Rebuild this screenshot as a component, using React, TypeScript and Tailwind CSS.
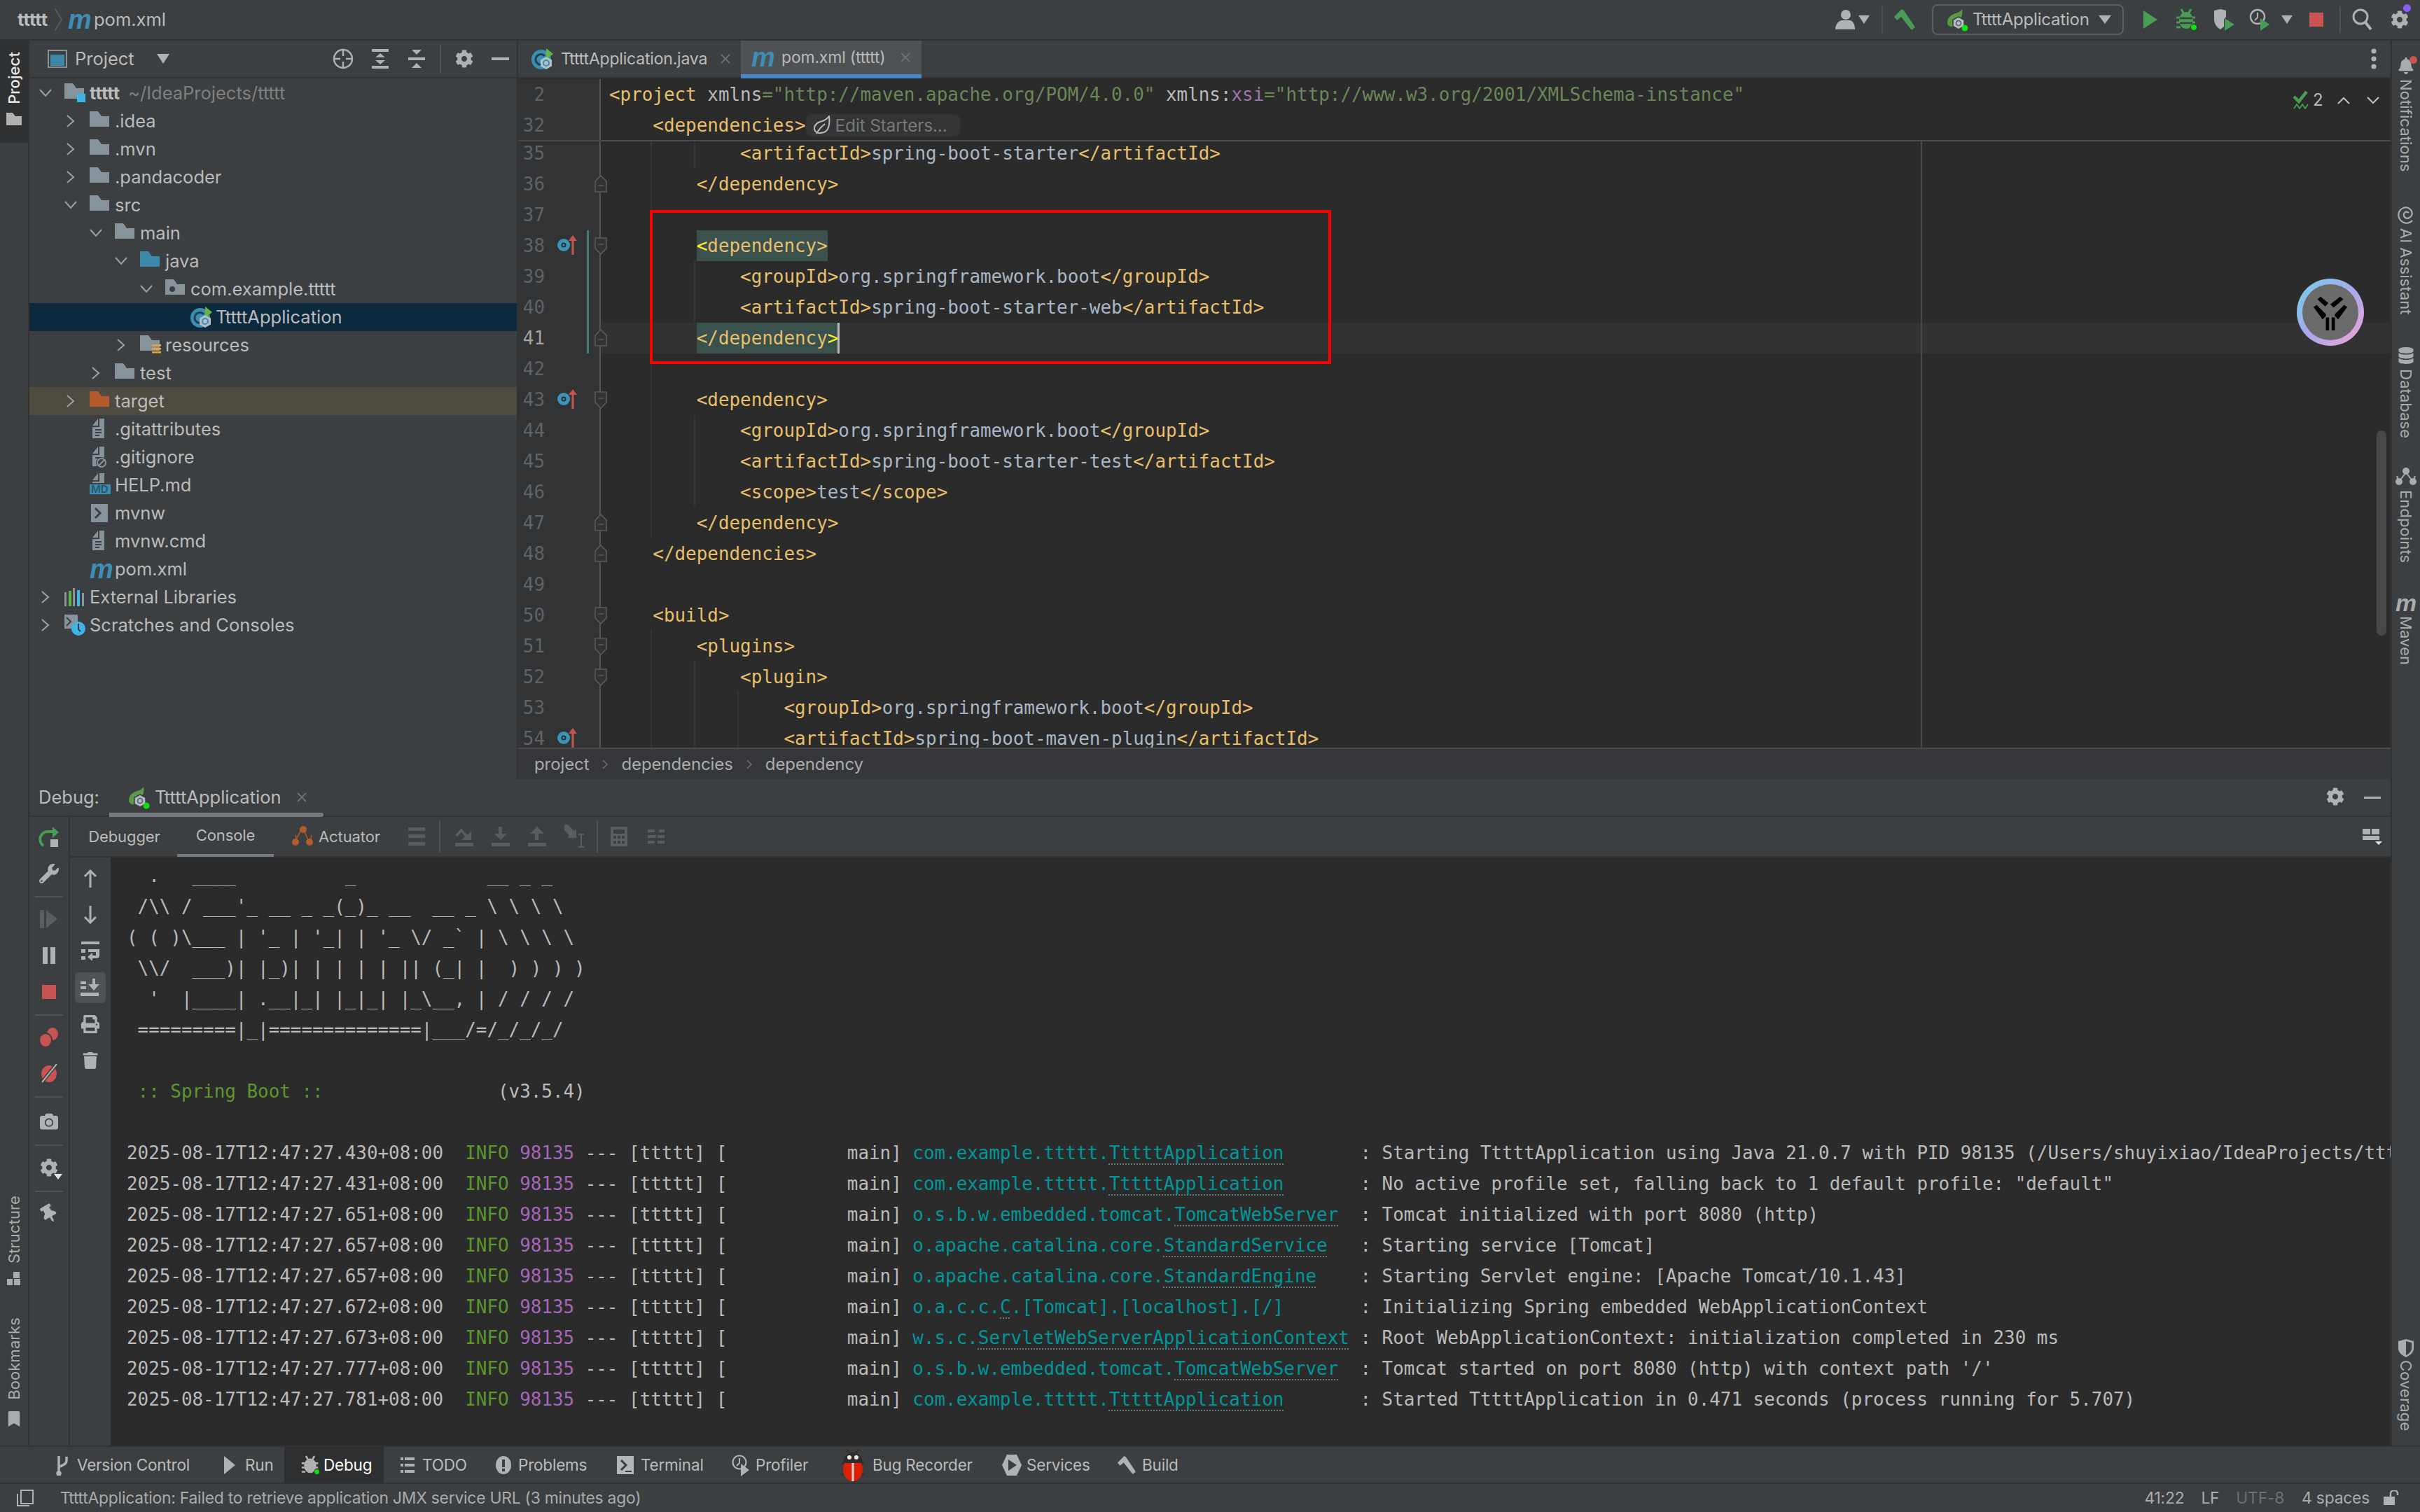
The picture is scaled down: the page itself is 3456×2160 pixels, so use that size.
import React from "react";
import { FaCog, FaCamera, FaPrint, FaTrash, FaWrench, FaThumbtack, FaBell, FaDatabase, FaBookmark } from "react-icons/fa";

const GREY = "#afb1b3";
const FOLDER = "#87939a";

function Chevron({ down }: { down?: boolean }) {
  return down ? (
    <svg width="18" height="12" viewBox="0 0 18 12"><path d="M1 1l8 9 8-9" fill="none" stroke="#9da0a2" strokeWidth="2" /></svg>
  ) : (
    <svg width="12" height="18" viewBox="0 0 12 18"><path d="M1 1l9 8-9 8" fill="none" stroke="#9da0a2" strokeWidth="2" /></svg>
  );
}

function Folder({ color = FOLDER, kind }: { color?: string; kind?: string }) {
  return (
    <svg width="32" height="30" viewBox="0 0 32 30" className="overflow-visible">
      <path d="M0 1h12l5 7h11v15H0z" fill={color} />
      {kind === "root" && <rect x="18" y="16" width="12" height="12" fill="#3fb3e5" />}
      {kind === "pkg" && <circle cx="10" cy="15" r="4" fill="#3c3f41" />}
      {kind === "res" && (
        <g fill="#e5a33a">
          <rect x="17" y="14" width="13" height="2.6" />
          <rect x="17" y="19" width="13" height="2.6" />
          <rect x="17" y="24" width="13" height="2.6" />
        </g>
      )}
    </svg>
  );
}

function FileIcon({ kind }: { kind?: string }) {
  return (
    <svg width="32" height="30" viewBox="0 0 32 30" className="overflow-visible">
      <g>
        <path d="M12 0v10H4z" fill={FOLDER} />
        <path d="M14 0h7v28H4V12h10z" fill={FOLDER} />
      </g>
      {kind === "text" && (
        <g fill="#3c3f41">
          <rect x="8" y="15" width="9" height="2" />
          <rect x="8" y="19" width="9" height="2" />
          <rect x="8" y="23" width="6" height="2" />
        </g>
      )}
      {kind === "ignore" && (
        <g>
          <rect x="8" y="15" width="9" height="2" fill="#3c3f41" />
          <circle cx="17" cy="23" r="8" fill="#3c3f41" />
          <circle cx="17" cy="23" r="6" fill="none" stroke={FOLDER} strokeWidth="2" />
          <path d="M13 27l8-8" stroke={FOLDER} strokeWidth="2" />
        </g>
      )}
    </svg>
  );
}

function MdIcon() {
  return (
    <div className="relative w-[32px] h-[30px]">
      <svg width="32" height="30" viewBox="0 0 32 30" className="overflow-visible">
        <path d="M12 -2v10H4z" fill={FOLDER} />
        <path d="M14 -2h7v14H4V10h10z" fill={FOLDER} />
        <rect x="0" y="14" width="30" height="14" fill="#3a8eb0" />
      </svg>
      <span className="absolute left-[2px] top-[12px] text-[15px] leading-[18px] font-['Inter'] text-[#2f5466] font-semibold tracking-normal">MD</span>
    </div>
  );
}

function ShellIcon({ color = FOLDER, dark = "#3c3f41", under }: { color?: string; dark?: string; under?: boolean }) {
  return (
    <svg width="24" height="28" viewBox="0 0 24 28">
      <rect x="0" y="1" width="24" height="26" fill={color} />
      <path d="M6 7l7 7-7 7" fill="none" stroke={dark} strokeWidth="3" />
      {under && <rect x="12" y="22" width="9" height="2" fill={dark} />}
    </svg>
  );
}

function SpringApp({ className = "" }: { className?: string }) {
  return (
    <svg width="32" height="34" viewBox="0 0 32 34" className={className}>
      <circle cx="14" cy="18" r="14" fill="#3a8fb7" />
      <path d="M19 13a7.5 7.5 0 1 0 0 10" fill="none" stroke="#24404f" strokeWidth="3" />
      <path d="M21 2l10 8-10 8z" fill="#62b543" />
      <path d="M21 14l8 4.5v9L21 32l-8-4.5v-9z" fill="#b4bec4" />
      <circle cx="21" cy="23" r="4" fill="none" stroke="#3a8fb7" strokeWidth="2" />
    </svg>
  );
}

function RunConfigIcon() {
  return (
    <svg width="32" height="34" viewBox="0 0 32 34">
      <path d="M2 22c0-9 6-12 12-14 4-1 7-3 9-6 1 6 0 10-2 13l-8 12c-6 1-11-1-11-5z" fill="#5b9a45" />
      <path d="M18 13l8 4.5v9L18 31l-8-4.5v-9z" fill="#b4bec4" stroke="#3c3f41" strokeWidth="1.5" />
      <circle cx="18" cy="22" r="3.5" fill="none" stroke="#4d5a62" strokeWidth="1.6" />
      <circle cx="27" cy="29" r="4.5" fill="#0fe00f" />
    </svg>
  );
}

function Maven({ size = "md", color = "text-[#3d8db5]" }: { size?: string; color?: string }) {
  return (
    <span
      className={
        "font-['Liberation_Sans'] italic font-bold block leading-none tracking-normal " +
        color +
        (size === "md" ? " text-[38px]" : " text-[34px]")
      }
    >
      m
    </span>
  );
}

function Hammer({ color = "#499c54", size = 30 }: { color?: string; size?: number }) {
  return (
    <svg width={size} height={size} viewBox="0 0 30 30">
      <path d="M11 0L0 11l4 5 6-5 15 19 5-4L14 2z" fill={color} />
    </svg>
  );
}

function BugIcon({ color = "#499c54", dot = true, size = 30 }: { color?: string; dot?: boolean; size?: number }) {
  return (
    <svg width={size} height={size + 2} viewBox="0 0 30 32">
      <g stroke={color} strokeWidth="3">
        <path d="M8 1l4 7M22 1l-4 7M1 13h6M1 20h6M1 27h6M23 13h5M23 20h5M23 27h3" />
      </g>
      <ellipse cx="15" cy="17" rx="10" ry="12" fill={color} />
      {color !== GREY && <path d="M6 14h18M6 21h18" stroke="#3c3f41" strokeWidth="2.5" />}
      {dot && <circle cx="26" cy="27" r="4.5" fill="#0fe00f" stroke="#3c3f41" strokeWidth="1" />}
    </svg>
  );
}

function Divider() {
  return <div className="w-[2px] h-[38px] bg-[#4f5254]" />;
}

function TopBar() {
  return (
    <div className="h-[58px] shrink-0 flex items-center bg-[#3c3f41] border-b-2 border-[#323232] text-[#bbbbbb] font-['Inter'] text-[24px]">
      <span className="ml-[25px] w-[48px] font-bold text-[#bbbbbb] text-[25.5px]">ttttt</span>
      <svg width="12" height="32" viewBox="0 0 12 32" className="ml-[5px]"><path d="M1 1l9 15-9 15" fill="none" stroke="#5e6060" strokeWidth="1.6" /></svg>
      <div className="ml-[7px] w-[37px]"><Maven /></div>
      <span className="text-[25.5px]">pom.xml</span>
      <div className="ml-auto flex items-center">
        <svg width="30" height="32" viewBox="0 0 30 32" className="mr-[4px]">
          <circle cx="16" cy="9" r="7" fill={GREY} />
          <path d="M1 30c0-8 5-12 9-13h12c4 1 7 5 7 13z" fill={GREY} />
          <path d="M22 5a6 6 0 0 1 2 10" stroke="#3c3f41" strokeWidth="2" fill="none" />
        </svg>
        <svg width="16" height="12" viewBox="0 0 16 12"><path d="M0 0h16l-8 12z" fill={GREY} /></svg>
        <div className="ml-[17px]"><Divider /></div>
        <div className="ml-[16px]"><Hammer /></div>
        <div className="ml-[24px] w-[274px] h-[44px] rounded-[8px] border-2 border-[#5e6060] flex items-center pl-[18px] pr-[16px]">
          <RunConfigIcon />
          <span className="ml-[6px] tracking-[-0.2px]">TttttApplication</span>
          <svg className="ml-auto" width="18" height="12" viewBox="0 0 18 12"><path d="M0 0h18l-9 12z" fill={GREY} /></svg>
        </div>
        <svg className="ml-[28px]" width="20" height="26" viewBox="0 0 20 26"><path d="M0 0l20 13L0 26z" fill="#499c54" /></svg>
        <div className="ml-[26px]"><BugIcon /></div>
        <svg className="ml-[23px]" width="32" height="32" viewBox="0 0 32 32">
          <path d="M2 3l9-2 8 2v8l-1 3-2 1v11l-5 4c-6-3-9-9-9-15z" fill={GREY} />
          <path d="M17 14l14 9-14 9z" fill="#499c54" />
        </svg>
        <svg className="ml-[20px]" width="32" height="34" viewBox="0 0 32 34">
          <circle cx="12" cy="13" r="10" fill="none" stroke={GREY} strokeWidth="2.4" />
          <path d="M12 7v7l-4 4" stroke={GREY} strokeWidth="2" fill="none" />
          <path d="M16 15l13 9-13 9z" fill="#499c54" />
        </svg>
        <svg className="ml-[14px]" width="16" height="12" viewBox="0 0 16 12"><path d="M0 0h16l-8 12z" fill={GREY} /></svg>
        <div className="ml-[24px] w-[20px] h-[20px] bg-[#c75450]" />
        <div className="ml-[23px]"><Divider /></div>
        <svg className="ml-[16px]" width="30" height="32" viewBox="0 0 30 32">
          <circle cx="12" cy="12" r="10" fill="none" stroke={GREY} strokeWidth="3" />
          <path d="M19 20l8 10" stroke={GREY} strokeWidth="4" />
        </svg>
        <div className="relative ml-[25px] mr-[16px] w-[26px] h-[26px] text-[#afb1b3]">
          <FaCog size={26} />
          <div className="absolute right-[-3px] top-[-9px] w-[11px] h-[11px] rounded-full bg-[#8b5cf6]" />
        </div>
      </div>
    </div>
  );
}

function VText({ children, flip, cls = "" }: { children: React.ReactNode; flip?: boolean; cls?: string }) {
  return (
    <span className={"[writing-mode:vertical-rl] whitespace-nowrap text-[22px] leading-[40px] tracking-[0.1px] " + (flip ? "rotate-180 " : "") + cls}>
      {children}
    </span>
  );
}

function LeftStripe() {
  return (
    <div className="w-[42px] shrink-0 flex flex-col border-r-2 border-[#323232] text-[#a9abad]">
      <div className="h-[146px] w-[40px] bg-[#2e3032] flex flex-col items-center pt-[16px]">
        <VText flip cls="text-[#e6e6e6] font-medium">Project</VText>
        <svg className="mt-[12px]" width="22" height="18" viewBox="0 0 22 18"><path d="M0 0h9l4 5h9v13H0z" fill="#afb1b3" /></svg>
      </div>
      <div className="mt-auto flex flex-col items-center pb-[27px]">
        <VText flip>Structure</VText>
        <svg className="mt-[12px]" width="20" height="20" viewBox="0 0 20 20" fill="#a9abad">
          <rect x="9" y="0" width="9" height="9" /><rect x="0" y="10" width="8" height="9" /><rect x="10" y="10" width="9" height="9" />
        </svg>
        <div className="mt-[45px]"><VText flip>Bookmarks</VText></div>
        <div className="mt-[10px]"><FaBookmark size={22} /></div>
      </div>
    </div>
  );
}

function StripeItem({ icon, label, cls }: { icon: React.ReactNode; label: string; cls: string }) {
  return (
    <div className={"flex flex-col items-center " + cls}>
      <div className="h-[30px] flex items-center justify-center">{icon}</div>
      <VText cls="mt-[4px]">{label}</VText>
    </div>
  );
}

function RightStripe() {
  return (
    <div className="w-[42px] shrink-0 flex flex-col items-center border-l-2 border-[#323232] text-[#a9abad] pt-[21px] pb-[21px]">
      <StripeItem
        cls="h-[213px]"
        label="Notifications"
        icon={
          <div className="relative">
            <FaBell size={24} />
            <div className="absolute right-[-4px] top-[-2px] w-[11px] h-[11px] rounded-full bg-[#c75450]" />
          </div>
        }
      />
      <StripeItem
        cls="h-[201px]"
        label="AI Assistant"
        icon={
          <svg width="26" height="28" viewBox="0 0 26 28" fill="none" stroke="#a9abad" strokeWidth="2.2">
            <path d="M22 22c-3 4-9 5-14 2C3 21 1 15 3 10c2-5 8-8 13-6 5 2 7 7 5 11-2 3-6 5-9 3-3-2-3-6 0-8 2-1 4 0 5 1" />
          </svg>
        }
      />
      <StripeItem cls="h-[173px]" label="Database" icon={<FaDatabase size={24} />} />
      <StripeItem
        cls="h-[180px]"
        label="Endpoints"
        icon={
          <svg width="30" height="26" viewBox="0 0 30 26" fill="#a9abad">
            <circle cx="15" cy="5" r="5" /><circle cx="5" cy="20" r="5" /><circle cx="25" cy="20" r="5" />
            <path d="M14 8L6 19M16 8l8 11M2 12l2 6M28 12l-2 6" stroke="#a9abad" strokeWidth="2" />
          </svg>
        }
      />
      <StripeItem cls="h-[120px]" label="Maven" icon={<Maven size="sm" color="text-[#a9abad]" />} />
      <div className="mt-auto flex flex-col items-center">
        <svg width="22" height="26" viewBox="0 0 22 26"><path d="M0 3l11-3 11 3v10c0 6-5 10-11 13C5 23 0 19 0 13z" fill="#a9abad" /><path d="M11 3v20c4-2 8-5 8-10V5z" fill="#3c3f41" /></svg>
        <VText cls="mt-[4px]">Coverage</VText>
      </div>
    </div>
  );
}

type Row = { d: number; name: string; chev?: "r" | "d"; icon: React.ReactNode; cls?: string; extra?: string; bold?: boolean };

const PL = ["pl-[10px]", "pl-[46px]", "pl-[82px]", "pl-[118px]", "pl-[154px]", "pl-[190px]"];

const rows: Row[] = [
  { d: 0, name: "ttttt", chev: "d", icon: <Folder kind="root" />, extra: "~/IdeaProjects/ttttt", bold: true },
  { d: 1, name: ".idea", chev: "r", icon: <Folder /> },
  { d: 1, name: ".mvn", chev: "r", icon: <Folder /> },
  { d: 1, name: ".pandacoder", chev: "r", icon: <Folder /> },
  { d: 1, name: "src", chev: "d", icon: <Folder /> },
  { d: 2, name: "main", chev: "d", icon: <Folder /> },
  { d: 3, name: "java", chev: "d", icon: <Folder color="#3d87a8" /> },
  { d: 4, name: "com.example.ttttt", chev: "d", icon: <Folder kind="pkg" /> },
  { d: 5, name: "TttttApplication", icon: <SpringApp />, cls: "bg-[#0d293e]" },
  { d: 3, name: "resources", chev: "r", icon: <Folder kind="res" /> },
  { d: 2, name: "test", chev: "r", icon: <Folder /> },
  { d: 1, name: "target", chev: "r", icon: <Folder color="#b45a2c" />, cls: "bg-[#4f4b41]" },
  { d: 1, name: ".gitattributes", icon: <FileIcon kind="text" /> },
  { d: 1, name: ".gitignore", icon: <FileIcon kind="ignore" /> },
  { d: 1, name: "HELP.md", icon: <MdIcon /> },
  { d: 1, name: "mvnw", icon: <div className="pl-[2px]"><ShellIcon /></div> },
  { d: 1, name: "mvnw.cmd", icon: <FileIcon kind="text" /> },
  { d: 1, name: "pom.xml", icon: <Maven /> },
  {
    d: 0,
    name: "External Libraries",
    chev: "r",
    icon: (
      <svg width="30" height="26" viewBox="0 0 30 26">
        <rect x="0" y="6" width="3" height="20" fill={FOLDER} /><rect x="6" y="4" width="4" height="22" fill="#62b543" />
        <rect x="12" y="0" width="3" height="26" fill={FOLDER} /><rect x="18" y="3" width="4" height="23" fill="#3fb3e5" />
        <rect x="25" y="7" width="3" height="19" fill={FOLDER} />
      </svg>
    ),
  },
  {
    d: 0,
    name: "Scratches and Consoles",
    chev: "r",
    icon: (
      <svg width="30" height="30" viewBox="0 0 30 30">
        <path d="M0 0h19v20H0z" fill={FOLDER} />
        <path d="M3 4l6 6-6 6" fill="none" stroke="#3c3f41" strokeWidth="2" />
        <circle cx="20" cy="20" r="10" fill="#3fb3e5" />
        <path d="M20 13v8l3 3" stroke="#3c3f41" strokeWidth="2" fill="none" />
      </svg>
    ),
  },
];

function ProjectPanel() {
  return (
    <div className="w-[698px] shrink-0 flex flex-col border-r-2 border-[#323232] font-['Inter'] text-[#bbbbbb] text-[25.5px]">
      <div className="h-[54px] shrink-0 flex items-center border-b-2 border-[#323232]">
        <svg className="ml-[26px]" width="28" height="26" viewBox="0 0 28 26">
          <rect x="1" y="1" width="26" height="24" fill="#3c3f41" stroke={FOLDER} strokeWidth="2" />
          <rect x="4" y="7" width="20" height="16" fill="#3d87a8" />
        </svg>
        <span className="ml-[11px]">Project</span>
        <svg className="ml-[32px]" width="18" height="14" viewBox="0 0 18 14"><path d="M0 0h18l-9 14z" fill={GREY} /></svg>
        <svg className="ml-auto" width="30" height="30" viewBox="0 0 30 30" fill="none" stroke={GREY} strokeWidth="2.4">
          <circle cx="15" cy="15" r="13" /><path d="M15 2v9M15 19v9M2 15h9M19 15h9" />
        </svg>
        <svg className="ml-[26px]" width="24" height="28" viewBox="0 0 24 28" fill={GREY}>
          <rect width="24" height="4" /><rect y="24" width="24" height="4" /><path d="M12 6l7 6H5zM12 22l-7-6h14z" />
        </svg>
        <svg className="ml-[28px]" width="24" height="28" viewBox="0 0 24 28" fill={GREY}>
          <rect y="12" width="24" height="4" /><path d="M5 1h14l-7 7zM12 20l7 7H5z" />
        </svg>
        <div className="ml-[21px] w-[2px] h-[40px] bg-[#505355]" />
        <div className="ml-[20px]"><FaCog size={26} color={GREY} /></div>
        <div className="ml-[26px] mr-[11px] w-[25px] h-[4px] bg-[#afb1b3]" />
      </div>
      <div className="pt-[1px]">
        {rows.map((r) => (
          <div key={r.name + r.d} className={"h-[40px] flex items-center " + PL[r.d] + " " + (r.cls || "")}>
            <div className="w-[26px] mr-[14px] flex justify-center">
              {r.chev && <Chevron down={r.chev === "d"} />}
            </div>
            <div className="w-[36px] shrink-0">{r.icon}</div>
            <span className={r.bold ? "font-bold" : ""}>{r.name}</span>
            {r.extra && <span className="ml-[12px] text-[#808080]">{r.extra}</span>}
          </div>
        ))}
      </div>
    </div>
  );
}

function xml(s: string) {
  return s.split(/(<[^>]+>)/).filter(Boolean).map((p, i) =>
    p.startsWith("<") ? (
      <span key={i} className="text-[#e8bf6a]">{p}</span>
    ) : (
      <span key={i} className="text-[#a9b7c6]">{p}</span>
    )
  );
}

function FoldMark({ open }: { open?: boolean }) {
  return (
    <svg width="18" height="26" viewBox="0 0 18 26" className={"absolute left-[109px] top-[9px] " + (open ? "rotate-180" : "")}>
      <path d="M1 24V9l8-8 8 8v15z" fill="#313335" stroke="#5a5a5a" strokeWidth="1.6" />
      <path d="M5 15h8" stroke="#5a5a5a" strokeWidth="1.6" />
    </svg>
  );
}

function BeanMark() {
  return (
    <svg width="30" height="30" viewBox="0 0 30 30" className="absolute left-[55px] top-[6px]">
      <circle cx="10" cy="15" r="9" fill="#3b93b8" />
      <circle cx="10" cy="15" r="3.5" fill="#2b2b2b" />
      <circle cx="10" cy="15" r="1.6" fill="#3b93b8" />
      <path d="M23 29V5" stroke="#c75450" strokeWidth="3" />
      <path d="M17 9l6-8 6 8z" fill="#c75450" />
    </svg>
  );
}

type Line = { n: number; c: React.ReactNode; fold?: "o" | "c"; bean?: boolean; git?: boolean; cur?: boolean };

function CodeLine({ l }: { l: Line }) {
  return (
    <div className={"h-[44px] shrink-0 flex " + (l.cur ? "bg-[#323232]" : "")}>
      <div className="relative w-[118px] shrink-0 bg-[#313335] border-r-2 border-[#555555]">
        <span className={"absolute right-[78px] top-0 leading-[44px] " + (l.cur ? "text-[#a4a3a3]" : "text-[#606366]")}>{l.n}</span>
        {l.bean && <BeanMark />}
        {l.git && <div className="absolute left-[98px] top-0 w-[3px] h-[44px] bg-[#477a6f]" />}
        {l.fold && <FoldMark open={l.fold === "o"} />}
      </div>
      <div className="pl-[12px] whitespace-pre leading-[44px]">{l.c}</div>
    </div>
  );
}

const MATCH = "bg-[#3b514d] inline-block h-[44px]";

const lines: Line[] = [
  { n: 35, c: xml("            <artifactId>spring-boot-starter</artifactId>") },
  { n: 36, c: xml("        </dependency>"), fold: "c" },
  { n: 37, c: "" },
  {
    n: 38,
    fold: "o",
    bean: true,
    git: true,
    c: (
      <>
        {"        "}
        <span className={MATCH}><span className="text-[#ffef28]">&lt;</span><span className="text-[#e8bf6a]">dependency&gt;</span></span>
      </>
    ),
  },
  { n: 39, git: true, c: xml("            <groupId>org.springframework.boot</groupId>") },
  { n: 40, git: true, c: xml("            <artifactId>spring-boot-starter-web</artifactId>") },
  {
    n: 41,
    fold: "c",
    git: true,
    cur: true,
    c: (
      <>
        {"        "}
        <span className={MATCH}><span className="text-[#e8bf6a]">&lt;/dependency</span><span className="text-[#ffef28]">&gt;</span></span>
        <span className="inline-block align-top w-[3px] h-[44px] bg-[#bbbbbb] -ml-[1px]" />
      </>
    ),
  },
  { n: 42, c: "" },
  { n: 43, bean: true, fold: "o", c: xml("        <dependency>") },
  { n: 44, c: xml("            <groupId>org.springframework.boot</groupId>") },
  { n: 45, c: xml("            <artifactId>spring-boot-starter-test</artifactId>") },
  { n: 46, c: xml("            <scope>test</scope>") },
  { n: 47, fold: "c", c: xml("        </dependency>") },
  { n: 48, fold: "c", c: xml("    </dependencies>") },
  { n: 49, c: "" },
  { n: 50, fold: "o", c: xml("    <build>") },
  { n: 51, fold: "o", c: xml("        <plugins>") },
  { n: 52, fold: "o", c: xml("            <plugin>") },
  { n: 53, c: xml("                <groupId>org.springframework.boot</groupId>") },
  { n: 54, bean: true, c: xml("                <artifactId>spring-boot-maven-plugin</artifactId>") },
];

function CloseX() {
  return (
    <svg width="14" height="14" viewBox="0 0 14 14"><path d="M1 1l12 12M13 1L1 13" stroke="#6d7073" strokeWidth="1.8" /></svg>
  );
}

function Editor() {
  return (
    <div className="flex-1 min-w-0 flex flex-col">
      <div className="h-[54px] shrink-0 flex items-stretch border-b-2 border-[#323232] font-['Inter'] text-[23px] text-[#bbbbbb] tracking-[-0.2px]">
        <div className="w-[318px] flex items-center pl-[19px]">
          <SpringApp />
          <span className="ml-[10px]">TttttApplication.java</span>
          <div className="ml-auto mr-[15px]"><CloseX /></div>
        </div>
        <div className="w-[258px] flex items-center pl-[15px] bg-[#4e5254] border-b-[6px] border-[#4a88c7] -mb-[2px]">
          <div className="w-[43px]"><Maven /></div>
          <span>pom.xml (ttttt)</span>
          <div className="ml-auto mr-[16px]"><CloseX /></div>
        </div>
        <svg className="ml-auto mr-[20px] self-center" width="8" height="30" viewBox="0 0 8 30" fill={GREY}>
          <circle cx="4" cy="4" r="3.6" /><circle cx="4" cy="15" r="3.6" /><circle cx="4" cy="26" r="3.6" />
        </svg>
      </div>
      <div className="flex-1 min-h-0 flex flex-col bg-[#2b2b2b] font-['DejaVu_Sans_Mono'] text-[25.9px]">
        <div className="shrink-0 relative border-b-2 border-[#4a4a4a] h-[90px] pt-[1px] overflow-hidden">
          <CodeLine
            l={{
              n: 2,
              c: (
                <>
                  <span className="text-[#e8bf6a]">&lt;project</span>
                  <span className="text-[#bababa]"> xmlns</span>
                  <span className="text-[#6a8759]">="http://maven.apache.org/POM/4.0.0"</span>
                  <span className="text-[#bababa]"> xmlns:</span>
                  <span className="text-[#9876aa]">xsi</span>
                  <span className="text-[#6a8759]">="http://www.w3.org/2001/XMLSchema-instance"</span>
                </>
              ),
            }}
          />
          <CodeLine
            l={{
              n: 32,
              c: (
                <span className="flex items-center h-[44px]">
                  <span className="text-[#e8bf6a] whitespace-pre">{"    <dependencies>"}</span>
                  <span className="h-[32px] w-[220px] rounded-[8px] bg-[#323436] flex items-center pl-[10px] font-['Inter'] text-[24.5px] tracking-[-0.2px] text-[#787878]">
                    <svg width="26" height="28" viewBox="0 0 26 28" fill="none" stroke="#bbbbbb" strokeWidth="2">
                      <path d="M23 1c1 8 1 16-4 21-5 4-13 4-16 0C0 17 4 11 10 9c5-1 10-4 13-8zM5 26c3-6 7-10 12-14" />
                    </svg>
                    <span className="ml-[6px] leading-[32px]">Edit Starters...</span>
                  </span>
                </span>
              ),
            }}
          />
          <div className="absolute left-[2534px] top-[13px] flex items-center font-['Inter'] text-[#bbbbbb] text-[24px]">
            <svg width="26" height="26" viewBox="0 0 26 26" fill="none" stroke="#499c54">
              <path d="M2 8l7 7L20 1" strokeWidth="4.5" />
              <path d="M2 25l4-6 4 6 4-6 4 6 4-6" strokeWidth="1.8" />
            </svg>
            <span className="ml-[3px]">2</span>
            <svg className="ml-[20px]" width="18" height="11" viewBox="0 0 18 11"><path d="M1 10l8-8 8 8" fill="none" stroke="#c0c0c0" strokeWidth="2" /></svg>
            <svg className="ml-[24px]" width="18" height="11" viewBox="0 0 18 11"><path d="M1 1l8 8 8-8" fill="none" stroke="#c0c0c0" strokeWidth="2" /></svg>
          </div>
        </div>
        <div className="flex-1 min-h-0 overflow-hidden">
          <div className="-mt-[5px]">
            {lines.map((l) => (
              <CodeLine key={l.n} l={l} />
            ))}
          </div>
        </div>
      </div>
      <div className="h-[45px] shrink-0 flex items-center bg-[#35373a] border-t-2 border-[#4a4a4a] pl-[23px] font-['Inter'] text-[24px] text-[#a9abad] tracking-[-0.1px]">
        <span>project</span>
        <svg className="mx-[19px]" width="8" height="14" viewBox="0 0 8 14"><path d="M1 1l6 6-6 6" fill="none" stroke="#6b6d6f" strokeWidth="1.5" /></svg>
        <span>dependencies</span>
        <svg className="mx-[19px]" width="8" height="14" viewBox="0 0 8 14"><path d="M1 1l6 6-6 6" fill="none" stroke="#6b6d6f" strokeWidth="1.5" /></svg>
        <span>dependency</span>
      </div>
    </div>
  );
}

function ToolBtn({ children }: { children: React.ReactNode }) {
  return <div className="h-[52px] w-full flex items-center justify-center">{children}</div>;
}

function Sep({ cls = "" }: { cls?: string }) {
  return (
    <div className={"h-[13px] w-full flex items-center justify-center " + cls}>
      <div className="w-[40px] h-[2px] bg-[#4f5254]" />
    </div>
  );
}

function DebugLeftBar() {
  return (
    <div className="w-[58px] shrink-0 flex flex-col pt-[3px] border-r-2 border-[#323232] text-[#afb1b3]">
      <ToolBtn>
        <svg width="30" height="30" viewBox="0 0 30 30">
          <path d="M22 7H14a11 11 0 0 0-7 20" fill="none" stroke="#499c54" strokeWidth="4" />
          <path d="M20 0l9 8-9 8z" fill="#499c54" />
          <rect x="17" y="18" width="11" height="11" fill="#afb1b3" />
        </svg>
      </ToolBtn>
      <ToolBtn><FaWrench size={28} /></ToolBtn>
      <Sep />
      <ToolBtn>
        <svg width="26" height="26" viewBox="0 0 26 26" fill="#5a5d5f"><rect width="6" height="26" /><path d="M9 0l16 13L9 26z" /></svg>
      </ToolBtn>
      <ToolBtn>
        <svg width="18" height="24" viewBox="0 0 18 24" fill="#afb1b3"><rect width="7" height="24" /><rect x="11" width="7" height="24" /></svg>
      </ToolBtn>
      <ToolBtn><div className="w-[20px] h-[20px] bg-[#c75450]" /></ToolBtn>
      <Sep />
      <ToolBtn>
        <svg width="28" height="28" viewBox="0 0 28 28" fill="#c75450"><ellipse cx="19" cy="9" rx="8" ry="9" /><ellipse cx="9" cy="18" rx="9" ry="10" stroke="#3c3f41" strokeWidth="2" /></svg>
      </ToolBtn>
      <ToolBtn>
        <svg width="28" height="28" viewBox="0 0 28 28"><ellipse cx="14" cy="14" rx="11" ry="12" fill="#c75450" /><path d="M24 1L3 27" stroke="#3c3f41" strokeWidth="5" /><path d="M25 0L4 26" stroke="#afb1b3" strokeWidth="2" /></svg>
      </ToolBtn>
      <Sep />
      <ToolBtn><div className="mt-[6px]"><FaCamera size={26} /></div></ToolBtn>
      <Sep cls="mt-[4px]" />
      <ToolBtn>
        <div className="relative">
          <FaCog size={26} />
          <svg className="absolute right-[-6px] bottom-[-4px]" width="12" height="8" viewBox="0 0 12 8"><path d="M0 0h12L6 8z" fill="#dfe1e5" /></svg>
        </div>
      </ToolBtn>
      <Sep cls="mt-[1px]" />
      <ToolBtn><div className="-scale-x-100"><FaThumbtack size={26} className="rotate-[30deg]" /></div></ToolBtn>
    </div>
  );
}

function DebugSecondBar() {
  return (
    <div className="w-[58px] shrink-0 flex flex-col items-center pt-[4px] text-[#afb1b3]">
      <ToolBtn>
        <svg width="20" height="26" viewBox="0 0 20 26" fill="none" stroke="#afb1b3" strokeWidth="3"><path d="M10 26V3M2 10l8-8 8 8" /></svg>
      </ToolBtn>
      <ToolBtn>
        <svg width="20" height="26" viewBox="0 0 20 26" fill="none" stroke="#afb1b3" strokeWidth="3"><path d="M10 0v23M2 16l8 8 8-8" /></svg>
      </ToolBtn>
      <ToolBtn>
        <svg width="26" height="28" viewBox="0 0 26 28" fill="#afb1b3"><rect width="26" height="4" /><rect y="11" width="6" height="5" /><rect y="21" width="6" height="5" /><path d="M10 11h16v9c0 3-2 4-5 4h-5v4l-7-6 7-6v4h5v-5H10z" /></svg>
      </ToolBtn>
      <div className="w-[44px] h-[44px] rounded-[5px] bg-[#4e5254] flex items-center justify-center my-[4px]">
        <svg width="28" height="26" viewBox="0 0 28 26" fill="#afb1b3"><rect y="4" width="8" height="4" /><rect y="11" width="8" height="4" /><rect y="20" width="26" height="5" /><path d="M17 0h4v8h6l-8 9-8-9h6z" /></svg>
      </div>
      <ToolBtn><FaPrint size={26} /></ToolBtn>
      <ToolBtn><FaTrash size={24} /></ToolBtn>
    </div>
  );
}

const SUB = "#5a5d5f";

function SubToolbar() {
  return (
    <div className="h-[58px] shrink-0 flex items-center border-b-2 border-[#323232] font-['Inter'] text-[22px] text-[#bbbbbb] tracking-[-0.1px]">
      <div className="h-[58px] w-[155px] flex items-center justify-center -ml-[2px]"><span className="pl-[4px]">Debugger</span></div>
      <div className="h-[58px] w-[138px] flex items-center justify-center border-b-4 border-[#747a80]"><span>Console</span></div>
      <svg className="ml-[26px]" width="30" height="30" viewBox="0 0 30 30">
        <path d="M4 22L13 6M24 22L17 6M5 13l2 9M28 13l-2 9" stroke="#a8532c" strokeWidth="1.8" />
        <circle cx="16" cy="5" r="5" fill="#b45a2c" /><circle cx="5" cy="23" r="5" fill="#b45a2c" /><circle cx="25" cy="23" r="5" fill="#b45a2c" />
      </svg>
      <span className="ml-[8px] w-[90px]">Actuator</span>
      <svg className="ml-[38px]" width="24" height="26" viewBox="0 0 24 26" fill={SUB}><rect width="24" height="5" /><rect y="10" width="24" height="5" /><rect y="21" width="24" height="5" /></svg>
      <div className="ml-[20px] w-[2px] h-[46px] bg-[#505355]" />
      <svg className="ml-[21px]" width="26" height="28" viewBox="0 0 26 28" fill={SUB}><rect y="23" width="26" height="5" /><path d="M0 12L9 2l8 10 6-5v12H9l5-5-5-6-6 6z" /></svg>
      <svg className="ml-[26px]" width="26" height="28" viewBox="0 0 26 28" fill={SUB}><rect y="23" width="26" height="5" /><path d="M10 0h5v10h7l-9 9-9-9h6z" /></svg>
      <svg className="ml-[26px]" width="26" height="28" viewBox="0 0 26 28" fill={SUB}><rect y="23" width="26" height="5" /><path d="M10 19V10H3l10-10 10 10h-8v9z" /></svg>
      <svg className="ml-[26px]" width="30" height="34" viewBox="0 0 30 34" fill={SUB}><path d="M0 0h5l9 9 3-3v13H4l3-3-7-8z" /><path d="M20 14h8M20 32h8M24 14v18" stroke={SUB} strokeWidth="2" /></svg>
      <div className="ml-[16px] w-[2px] h-[46px] bg-[#505355]" />
      <svg className="ml-[18px]" width="24" height="28" viewBox="0 0 24 28"><rect width="24" height="28" fill={SUB} /><rect x="4" y="4" width="16" height="6" fill="#3c3f41" /><g fill="#3c3f41"><rect x="4" y="13" width="4" height="4" /><rect x="10" y="13" width="4" height="4" /><rect x="16" y="13" width="4" height="4" /><rect x="4" y="20" width="4" height="4" /><rect x="10" y="20" width="4" height="4" /><rect x="16" y="20" width="4" height="4" /></g></svg>
      <svg className="ml-[29px]" width="24" height="24" viewBox="0 0 24 24" fill={SUB}><rect y="2" width="10" height="4" /><rect x="14" y="2" width="10" height="4" /><rect y="10" width="24" height="4" /><rect y="18" width="10" height="4" /><rect x="14" y="18" width="10" height="4" /><path d="M10 24L16 0" stroke="#3c3f41" strokeWidth="2" /></svg>
      <div className="relative ml-auto mr-[12px]">
        <svg width="28" height="24" viewBox="0 0 28 24" fill={GREY}><rect x="0" y="1" width="11" height="8" /><rect x="13" y="1" width="11" height="8" /><rect x="0" y="11" width="24" height="6" /><path d="M18 19h10l-5 5z" fill="#dfe1e5" /></svg>
      </div>
    </div>
  );
}

const TEAL = "text-[#00979a]";

function Logger({ pre, cls, post, pad }: { pre: string; cls: string; post: string; pad: number }) {
  return (
    <span className={TEAL}>
      {pre}
      <span className="underline decoration-dotted decoration-[2px] underline-offset-[6px] decoration-[#5f7f7f] [text-decoration-skip-ink:none]">{cls}</span>
      {post}
      {" ".repeat(pad)}
    </span>
  );
}

type Log = { ts: string; pre: string; cls: string; post?: string; msg: string };

const logs: Log[] = [
  { ts: "430", pre: "com.example.ttttt.", cls: "TttttApplication", msg: "Starting TttttApplication using Java 21.0.7 with PID 98135 (/Users/shuyixiao/IdeaProjects/ttttt)" },
  { ts: "431", pre: "com.example.ttttt.", cls: "TttttApplication", msg: 'No active profile set, falling back to 1 default profile: "default"' },
  { ts: "651", pre: "o.s.b.w.embedded.tomcat.", cls: "TomcatWebServer", msg: "Tomcat initialized with port 8080 (http)" },
  { ts: "657", pre: "o.apache.catalina.core.", cls: "StandardService", msg: "Starting service [Tomcat]" },
  { ts: "657", pre: "o.apache.catalina.core.", cls: "StandardEngine", msg: "Starting Servlet engine: [Apache Tomcat/10.1.43]" },
  { ts: "672", pre: "o.a.c.c.", cls: "C", post: ".[Tomcat].[localhost].[/]", msg: "Initializing Spring embedded WebApplicationContext" },
  { ts: "673", pre: "w.s.c.", cls: "ServletWebServerApplicationContext", msg: "Root WebApplicationContext: initialization completed in 230 ms" },
  { ts: "777", pre: "o.s.b.w.embedded.tomcat.", cls: "TomcatWebServer", msg: "Tomcat started on port 8080 (http) with context path '/'" },
  { ts: "781", pre: "com.example.ttttt.", cls: "TttttApplication", msg: "Started TttttApplication in 0.471 seconds (process running for 5.707)" },
];

const banner = [
  "  .   ____          _            __ _ _",
  " /\\\\ / ___'_ __ _ _(_)_ __  __ _ \\ \\ \\ \\",
  "( ( )\\___ | '_ | '_| | '_ \\/ _` | \\ \\ \\ \\",
  " \\\\/  ___)| |_)| | | | | || (_| |  ) ) ) )",
  "  '  |____| .__|_| |_|_| |_\\__, | / / / /",
  " =========|_|==============|___/=/_/_/_/",
  "",
];

function Console() {
  return (
    <div className="flex-1 min-w-0 bg-[#2b2b2b] pl-[23px] pt-[4px] overflow-hidden font-['DejaVu_Sans_Mono'] text-[25.9px] leading-[44px] text-[#bbbbbb] whitespace-pre">
      {banner.map((b, i) => (
        <div key={i} className="h-[44px]">{b}</div>
      ))}
      <div className="h-[44px]"><span className="text-[#5c962c]"> :: Spring Boot ::</span>{"                (v3.5.4)"}</div>
      <div className="h-[44px]" />
      {logs.map((l, i) => {
        const len = l.pre.length + l.cls.length + (l.post || "").length;
        return (
          <div key={i} className="h-[44px]">
            {"2025-08-17T12:47:27." + l.ts + "+08:00  "}
            <span className="text-[#5c962c]">INFO</span>{" "}
            <span className="text-[#a566b8]">98135</span>
            {" --- [ttttt] [           main] "}
            <Logger pre={l.pre} cls={l.cls} post={l.post || ""} pad={40 - len} />
            {" : " + l.msg}
          </div>
        );
      })}
    </div>
  );
}

function DebugPanel() {
  return (
    <div className="flex-1 min-h-0 flex flex-col">
      <div className="h-[54px] shrink-0 flex items-center border-b-2 border-[#323232] font-['Inter'] text-[25.5px] text-[#bbbbbb]">
        <span className="ml-[13px] w-[101px]">Debug:</span>
        <div className="relative h-[52px] w-[306px] flex items-center pl-[26px]">
          <RunConfigIcon />
          <span className="ml-[7px]">TttttApplication</span>
          <div className="ml-auto mr-[24px]"><CloseX /></div>
          <div className="absolute left-0 right-0 bottom-[-2px] h-[6px] rounded-r-[3px] bg-[#747a80]" />
        </div>
        <div className="ml-auto mr-[28px] -translate-y-[1px]"><FaCog size={26} color={GREY} /></div>
        <div className="mr-[14px] w-[24px] h-[3px] bg-[#afb1b3]" />
      </div>
      <div className="flex-1 min-h-0 flex">
        <DebugLeftBar />
        <div className="flex-1 min-w-0 flex flex-col">
          <SubToolbar />
          <div className="flex-1 min-h-0 flex">
            <DebugSecondBar />
            <Console />
          </div>
        </div>
      </div>
    </div>
  );
}

function BottomItem({ w, icon, box, label, active, pl }: { w: string; icon: React.ReactNode; box: string; label: string; active?: boolean; pl?: string }) {
  return (
    <div className={"h-full flex items-center shrink-0 " + w + " " + (pl || "") + (active ? " bg-[#2d2f31] text-white" : "")}>
      <div className={"shrink-0 flex items-center " + box}>{icon}</div>
      <span>{label}</span>
    </div>
  );
}

function BottomBar() {
  return (
    <div className="h-[53px] shrink-0 flex items-center pl-[80px] border-t-2 border-[#323232] font-['Inter'] text-[22.5px] text-[#bbbbbb] tracking-[-0.2px]">
      <BottomItem
        w="w-[240px]" box="w-[30px]" label="Version Control"
        icon={<svg width="18" height="30" viewBox="0 0 18 30" fill="none" stroke={GREY} strokeWidth="3.5"><path d="M4 2v26M15 3v6c0 5-6 6-11 9" /><circle cx="4" cy="27" r="2" /></svg>}
      />
      <BottomItem
        w="w-[86px]" box="w-[30px]" label="Run"
        icon={<svg width="16" height="26" viewBox="0 0 16 26"><path d="M0 0l16 13L0 26z" fill={GREY} /></svg>}
      />
      <BottomItem w="w-[142px]" pl="pl-[24px]" box="w-[32px]" label="Debug" active icon={<BugIcon color={GREY} size={26} />} />
      <BottomItem
        w="w-[160px]" pl="pl-[24px]" box="w-[31px]" label="TODO"
        icon={<svg width="20" height="24" viewBox="0 0 20 24" fill={GREY}><rect y="1" width="4" height="4" /><rect x="6" y="1" width="14" height="4" /><rect y="10" width="4" height="4" /><rect x="6" y="10" width="14" height="4" /><rect y="19" width="4" height="4" /><rect x="6" y="19" width="14" height="4" /></svg>}
      />
      <BottomItem
        w="w-[173px]" box="w-[32px]" label="Problems"
        icon={<svg width="22" height="26" viewBox="0 0 22 26"><ellipse cx="11" cy="13" rx="11" ry="13" fill={GREY} /><rect x="9" y="5" width="4" height="11" fill="#3c3f41" /><rect x="9" y="18" width="4" height="4" fill="#3c3f41" /></svg>}
      />
      <BottomItem w="w-[164px]" box="w-[34px]" label="Terminal" icon={<ShellIcon color="#b4b6b8" under />} />
      <BottomItem
        w="w-[153px]" box="w-[34px]" label="Profiler"
        icon={<svg width="26" height="32" viewBox="0 0 26 32"><circle cx="11" cy="12" r="9.5" fill="none" stroke={GREY} strokeWidth="2.2" /><path d="M11 6v7l-4 4" stroke={GREY} strokeWidth="2" fill="none" /><path d="M13 14l12 9-12 9z" fill={GREY} /></svg>}
      />
      <BottomItem
        w="w-[233px]" box="w-[48px]" label="Bug Recorder"
        icon={
          <svg width="40" height="48" viewBox="0 0 40 48">
            <path d="M11 1l5 7M29 1l-5 7M4 20l5 3M36 20l-5 3M4 38l6-2M36 38l-6-2" stroke="#33302f" strokeWidth="3" />
            <ellipse cx="20" cy="30" rx="14" ry="17" fill="#dc2008" />
            <path d="M20 6c8 0 13 5 14 15H6C7 11 12 6 20 6z" fill="#2f2b2a" />
            <circle cx="15" cy="13" r="3" fill="#eee" /><circle cx="25" cy="13" r="3" fill="#eee" />
            <rect x="18.5" y="21" width="3" height="26" fill="#f0d8d0" />
          </svg>
        }
      />
      <BottomItem
        w="w-[165px]" box="w-[35px]" label="Services"
        icon={<svg width="28" height="30" viewBox="0 0 28 30"><path d="M7 0h14l7 15-7 15H7L0 15z" fill={GREY} /><path d="M9 7l12 8-12 8z" fill="#3c3f41" /></svg>}
      />
      <BottomItem w="w-[95px]" box="w-[35px]" label="Build" icon={<Hammer color={GREY} size={26} />} />
    </div>
  );
}

function StatusBar() {
  return (
    <div className="h-[42px] shrink-0 flex items-center border-t-2 border-[#323232] font-['Inter'] text-[22.8px] text-[#a9abad] tracking-[-0.2px]">
      <svg className="ml-[24px]" width="24" height="24" viewBox="0 0 24 24" fill="none" stroke={GREY} strokeWidth="2">
        <path d="M6 1h17v19H6zM1 6v17h17" />
      </svg>
      <span className="ml-[38px]">TttttApplication: Failed to retrieve application JMX service URL (3 minutes ago)</span>
      <div className="ml-auto flex items-center">
        <span>41:22</span>
        <span className="ml-[24px]">LF</span>
        <span className="ml-[24px] text-[#6e7072]">UTF-8</span>
        <span className="ml-[25px]">4 spaces</span>
        <svg className="ml-[20px] mr-[28px]" width="24" height="22" viewBox="0 0 24 22" fill={GREY}>
          <rect x="0" y="9" width="16" height="12" /><path d="M10 9V5a5 5 0 0 1 10 0v2" fill="none" stroke={GREY} strokeWidth="2.4" />
        </svg>
      </div>
    </div>
  );
}

function Overlays() {
  return (
    <>
      <div className="absolute left-[929px] top-[202px] w-[2px] h-[567px] bg-[#373737]" />
      <div className="absolute left-[929px] top-[899px] w-[2px] h-[169px] bg-[#373737]" />
      <div className="absolute left-[991px] top-[202px] w-[2px] h-[38px] bg-[#373737]" />
      <div className="absolute left-[991px] top-[372px] w-[2px] h-[88px] bg-[#373737]" />
      <div className="absolute left-[991px] top-[593px] w-[2px] h-[130px] bg-[#373737]" />
      <div className="absolute left-[991px] top-[943px] w-[2px] h-[125px] bg-[#373737]" />
      <div className="absolute left-[1053px] top-[988px] w-[2px] h-[80px] bg-[#373737]" />
      <div className="absolute left-[2743px] top-[202px] w-[2px] h-[866px] bg-[#484848]" />
      <div className="absolute left-[3394px] top-[615px] w-[14px] h-[293px] rounded-[7px] bg-[#484848]" />
      <div className="absolute left-[928px] top-[300px] w-[973px] h-[220px] border-[4px] border-[#ff0000]" />
      <div className="absolute left-[3280px] top-[398px] w-[96px] h-[96px] rounded-full bg-[linear-gradient(135deg,#6fd0e8,#a9a8ec_50%,#f2a6d2)] flex items-center justify-center">
        <div className="w-[80px] h-[80px] rounded-full bg-[#6b6b6b] flex items-center justify-center">
          <svg width="52" height="52" viewBox="0 0 56 56" fill="#000">
            <path d="M8 8l5-4 12 10-5 5zM48 8l-5-4-15 12 5 5z" />
            <path d="M2 20l5-3 13 13c2 2 2 3 0 5l-4 4zM54 20l-5-3-13 13c-2 2-2 3 0 5l4 4z" />
            <path d="M21 36h5v20h-5zM30 36h5v20h-5z" />
          </svg>
        </div>
      </div>
    </>
  );
}

export default function App() {
  return (
    <div className="relative w-[3456px] h-[2160px] overflow-hidden flex flex-col bg-[#3c3f41] font-['Inter',sans-serif]">
      <TopBar />
      <div className="flex-1 min-h-0 flex">
        <LeftStripe />
        <div className="flex-1 min-w-0 flex flex-col">
          <div className="h-[1055px] shrink-0 flex">
            <ProjectPanel />
            <Editor />
          </div>
          <DebugPanel />
        </div>
        <RightStripe />
      </div>
      <BottomBar />
      <StatusBar />
      <Overlays />
    </div>
  );
}
